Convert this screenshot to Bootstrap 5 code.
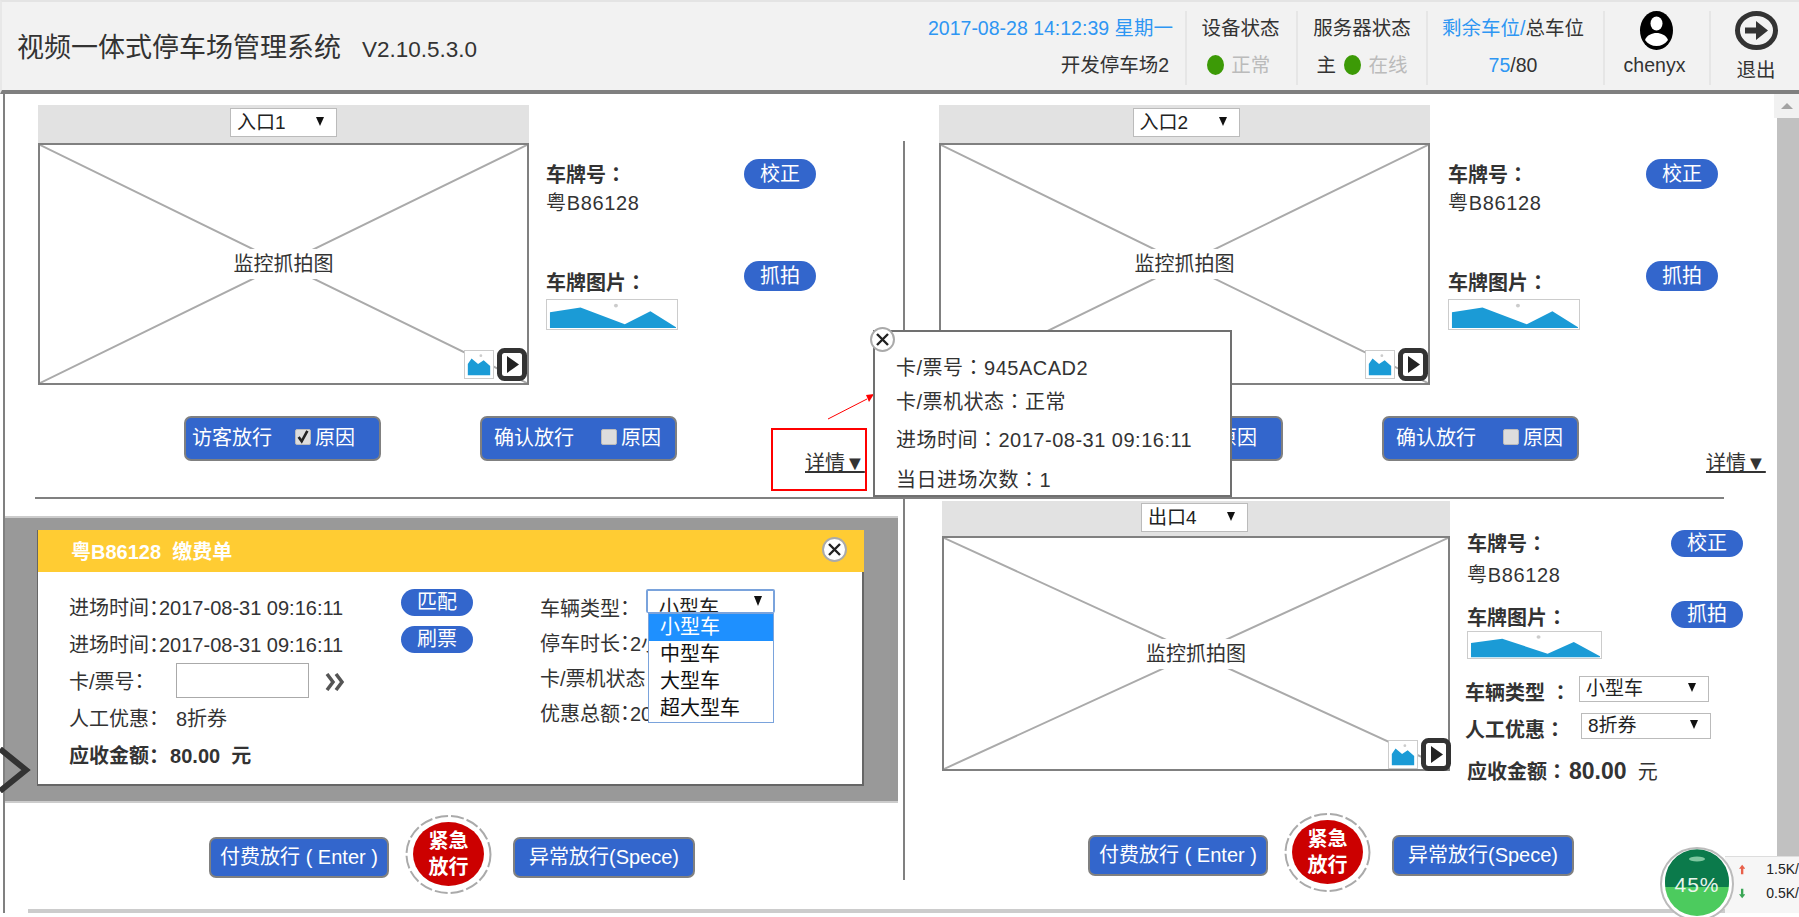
<!DOCTYPE html>
<html lang="zh-CN">
<head>
    <meta charset="UTF-8">
    <title>视频一体式停车场管理系统</title>
    <link href="https://cdn.jsdelivr.net/npm/bootstrap@5.3.3/dist/css/bootstrap.min.css" rel="stylesheet">
    <style>
        html, body { height: 917px; overflow: hidden; }
        body { font-family: "Liberation Sans", "Noto Sans CJK SC", sans-serif; font-size: 20px; color: #333; background: #fff; position: relative; line-height: 1.3; }
        .cn { font-family: "Noto Sans CJK TC", sans-serif; }

        /* header */
        .top-bar { height: 94px; background: #f2f2f2; border-top: 2px solid #e4e4e4; border-bottom: 4px solid #7f7f7f; border-left: 2px solid #e8e8e8; padding: 9px 0 5px; font-size: 19.5px; }
        .sys-title { font-size: 27px; padding-left: 15px; line-height: 74px; white-space: nowrap; }
        .sys-ver { font-size: 22.5px; margin-left: 21px; }
        .top-cell { border-left: 2px solid #e6e6e6; display: flex; flex-direction: column; gap: 3px; align-items: center; text-align: center; }
        .top-cell > div { height: 34px; line-height: 34px; white-space: nowrap; }
        .cell-date { align-items: flex-end; border-left: 0; padding-right: 12px; }
        .cell-date .park-name { margin-right: 4px; }
        .cell-dev { width: 111px; padding-right: 9px; }
        .cell-dev .dev-title { margin-right: -7px; }
        .cell-srv { width: 130px; }
        .cell-slot { width: 177px; padding-right: 5px; }
        .cell-user { width: 106px; padding-right: 5px; }
        .cell-user .top-icon { margin-left: 4px; }
        .cell-exit { width: 90px; padding-left: 2px; }
        .sky { color: #2e96f3; }
        .off { color: #bbb; }
        .led { display: inline-block; width: 17px; height: 20px; border-radius: 50%; background: #3c9a06; vertical-align: -3px; margin: 0 2px 0 3px; }
        .top-icon { height: 39px !important; }

        /* main */
        .main-wrap { height: 819px; padding-left: 3px; }
        .stage { width: 1772px; position: relative; border-left: 2px solid #808080; }
        .stage::before { content: ""; position: absolute; left: 898px; top: 47px; width: 2px; height: 739px; background: #808080; }
        .quad-top { height: 403px; }
        .quad-bot { height: 414px; }
        .quad-a { width: 898px; flex: none; padding: 11px 0 0 33px; }
        .quad-b { padding: 11px 0 0 36px; }
        .quad-b .cam-head { padding-left: 3px; }
        .quad-b .info-col { margin-left: 18px; }
        .quad-c { width: 898px; flex: none; padding-top: 17px; }
        .quad-d { padding: 2px 0 0 39px; }
        .h-rule { height: 2px; width: 1689px; margin-left: 30px; background: #808080; }
        .foot-line { position: absolute; left: 23px; right: 0; top: 815px; height: 4px; background: #ccc; }

        .cam-col { width: 491px; flex: none; }
        .cam-col-wide { width: 508px; }
        .cam-head { height: 38px; background: #e2e2e2; padding-top: 3px; }
        .cam-head-low { height: 35px; padding: 2px 3px 0 0; }
        .pick { width: 107px; height: 29px; background: #fff; border: 1px solid #bbb; padding: 0 12px 0 6px; color: #222; line-height: 27px; font-size: 19px; }
        .pick i { width: 0; height: 0; border-left: 4px solid transparent; border-right: 4px solid transparent; border-top: 9px solid #111; margin-bottom: 3px; }
        .cam-box { height: 242px; border: 2px solid #808080; position: relative; background: #fff; }
        .cam-box-low { height: 235px; }
        .cam-x { position: absolute; left: 0; top: 0; width: 100%; height: 100%; }
        .cam-txt { position: relative; background: #fff; padding: 0 3px; line-height: 30px; }
        .cam-tools { position: absolute; right: 0; bottom: 2px; display: flex; gap: 3px; align-items: flex-end; }
        .cam-box-low .cam-tools { right: -3px; bottom: -2px; }
        .mini-thumb { width: 30px; height: 29px; border: 1px solid #ccc; background: #fff; margin-bottom: 2px; display: block; }
        .play-btn { width: 30px; height: 33px; display: block; }

        .info-col { width: 270px; margin-left: 17px; padding-top: 54px; }
        .info-col-low { width: 276px; padding-top: 29px; }
        .fld { font-weight: 700; }
        .pill-btn { width: 72px; height: 30px; padding: 0; background: #3366cc; color: #fff; border: 0; font-size: 20px; line-height: 30px; }
        .pill-btn-sm { height: 27px; line-height: 27px; }
        .pill-btn:hover { background: #3366cc; color: #fff; }
        .plate-val { line-height: 28px; letter-spacing: .65px; }
        .snap-line { margin-top: 44px; }
        .snap-line .fld { margin-bottom: -5px; }
        .snap-line-low { margin-top: 12px; }
        .snap-line-low .fld { margin-bottom: -3px; }
        .plate-pic { width: 132px; height: 31px; border: 1px solid #ccc; display: block; margin-top: 8px; }
        .plate-pic-low { width: 135px; height: 28px; margin-top: 3px; }

        .act-row { height: 60px; margin-top: 31px; position: relative; }
        .act-btn { background: #3366cc; color: #fff; border: 2px solid #808080; border-radius: 7px; font-size: 20px; padding: 0; height: 45px; line-height: 41px; width: 197px; white-space: nowrap; }
        .act-btn:hover { background: #3366cc; color: #fff; border-color: #808080; }
        .act-btn-s { height: 41px; line-height: 37px; width: 180px; margin-top: 22px; }
        .act-btn-w { width: 182px; }
        .tick-box[type=checkbox] { width: 16px; height: 16px; margin: -4px 4px 0 0; border-radius: 2px; background-color: #ddd; border: 1px solid #bbb; flex: none; }
        .tick-box[type=checkbox]:checked { background-color: #ddd; border-color: #bbb; background-image: url("data:image/svg+xml,%3csvg xmlns='http://www.w3.org/2000/svg' viewBox='0 0 16 16'%3e%3cpath fill='none' stroke='%23222' stroke-width='3' d='M3 8l3.5 5L13 1'/%3e%3c/svg%3e"); }
        .first-act { padding-left: 6px; }
        .first-act .tick-box[type=checkbox] { margin-left: 23px; }
        .second-act { margin-left: 99px; padding-left: 12px; }
        .second-act .tick-box[type=checkbox] { margin-left: 27px; }
        .act-lead-a { margin-left: 146px; }
        .act-lead-b { margin-left: 147px; }
        .more-link { color: #333; line-height: 26px; white-space: nowrap; text-decoration: underline; }
        .quad-a .more-link { margin-left: 128px; }
        .quad-b .more-link { margin-left: 127px; }

        /* 紧急放行 */
        .panic { width: 87px; height: 79px; position: relative; flex: none; margin: 0 21px 0 16px; }
        .panic svg { position: absolute; left: 0; top: 0; width: 100%; height: 100%; }
        .panic-core { position: absolute; left: 8px; top: 7px; width: 71px; height: 64px; border-radius: 50%; background: #cc0000; color: #fff; font-weight: 700; line-height: 26px; }

        /* 缴费单 */
        .fee-band { width: 893px; height: 287px; background: #999; border-top: 2px solid #ccc; border-bottom: 2px solid #ccc; padding: 12px 0 0 32px; position: relative; }
        .fee-card { width: 827px; height: 256px; background: #fff; border-right: 2px solid #666; border-bottom: 2px solid #666; border-left: 1px solid #666; position: relative; }
        .fee-head { height: 42px; background: #ffcc33; color: #fff; font-weight: 700; padding-left: 33px; margin-right: -2px; line-height: 44px; white-space: pre; }
        .fee-body { font-feature-settings: "halt"; padding-top: 17px; white-space: nowrap; }
        .fee-a { width: 363px; padding-left: 31px; flex: none; }
        .fee-a > div { height: 37px; display: flex; align-items: center; }
        .fee-lbl { width: 107px; flex: none; }
        .fee-input { width: 133px; height: 35px; border: 1px solid #aaa; border-radius: 0; padding: 0 6px; margin-top: -2px; }
        .fee-b { width: 139px; flex: none; gap: 10px; }
        .fee-c { padding-top: 1px; position: relative; }
        .fee-c > div { height: 35px; line-height: 35px; }
        .open-pick { position: absolute; left: 106px; top: 0; width: 129px; height: 24px !important; border: 2px solid #7aa3dc; border-bottom-width: 1px; border-radius: 2px; background: #fff; overflow: hidden; padding-left: 11px; line-height: 34px !important; color: #222; }
        .open-pick i { position: absolute; right: 11px; top: 5px; width: 0; height: 0; border-left: 4px solid transparent; border-right: 4px solid transparent; border-top: 10px solid #111; }
        .open-list { position: absolute; left: 108px; top: 24px; width: 126px; height: 110px !important; background: #fff; border: 1px solid #7aa3dc; color: #111; }
        .open-list span { display: block; height: 27px; line-height: 27px; padding-left: 11px; }
        .open-list .cur { background: #1e90ff; color: #fff; }
        .btn-close-x { width: 25px; height: 25px; display: block; }
        .head-close { position: absolute; right: 15px; top: 7px; }
        .back-chev { position: absolute; left: -5px; top: 229px; width: 31px; height: 46px; }
        .bot-row-l { padding-left: 204px; margin-top: 12px; }
        .low-row { height: 270px; }
        .bot-row-r { margin-top: 42px; margin-left: -39px; padding-left: 185px; }

        .form-line { height: 26px; margin-left: -2px; white-space: nowrap; }
        .form-line .fld { width: 114px; flex: none; line-height: 26px; margin-top: 3px; }
        .form-line-a { margin-top: 17px; }
        .form-line-b { margin-top: 11px; }
        .form-line-b .fld { width: 116px; }
        .pick-low { width: 130px; height: 26px; line-height: 24px; }
        .due-line { margin-top: 20px; line-height: 24px; white-space: nowrap; }
        .due-num { font-size: 23px; margin-left: 2px; }

        /* 详情弹层 */
        .tip-box { position: absolute; left: 868px; top: 236px; width: 359px; height: 167px; background: #fff; border: 2px solid #707070; padding: 14px 0 0 21px; letter-spacing: .5px; z-index: 3; }
        .tip-box div { white-space: nowrap; line-height: 30px; }
        .tip-l1 { margin-top: 6px; }
        .tip-l2 { margin-top: 3px; }
        .tip-l3 { margin-top: 7px; }
        .tip-l4 { margin-top: 9px; }
        .tip-close { position: absolute; left: -5px; top: -5px; background: transparent; }
        .red-box { position: absolute; left: 766px; top: 334px; width: 96px; height: 63px; border: 2px solid #f00; z-index: 2; }
        .red-arrow { position: absolute; left: 820px; top: 298px; width: 50px; height: 28px; z-index: 2; }

        /* scrollbar */
        .scroll-col { width: 25px; flex: none; }
        .scroll-up { height: 24px; background: #f1f1f1; }
        .scroll-up i { width: 0; height: 0; border-left: 6px solid transparent; border-right: 6px solid transparent; border-bottom: 6px solid #a3a3a3; }
        .scroll-thumb { height: 795px; margin-left: 3px; background: #c1c1c1; }

        /* 右下角网速球 */
        .net-ball { position: absolute; right: 0; bottom: 0; width: 139px; height: 70px; overflow: hidden; z-index: 5; }
        .net-ball svg.ball { position: absolute; left: 0; top: 0; width: 74px; height: 74px; }
        .net-panel { position: absolute; right: 0; top: 9px; width: 74px; height: 57px; background: #f6f6f6; border-top: 1px solid #ddd; font-size: 14px; color: #222; padding-left: 14px; }
        .net-panel div { height: 23px; line-height: 23px; white-space: nowrap; margin-top: 1px; display: flex; align-items: center; gap: 21px; }
    </style>
</head>
<body>
    <svg width="0" height="0" class="position-absolute">
        <symbol id="pic-wide" viewBox="0 0 132 31" preserveAspectRatio="none">
            <polygon points="3,13 34,8 79,26 105,12 131,29 131,30 3,30" fill="#1b9bd6"/>
            <circle cx="70" cy="6" r="2" fill="#ccc"/>
        </symbol>
        <symbol id="pic-mini" viewBox="0 0 30 29">
            <polygon points="3,26 3,14 7,8 14,14 20,10 27,16 27,26" fill="#1b9bd6"/>
            <circle cx="17" cy="5" r="1.5" fill="#ccc"/>
        </symbol>
        <symbol id="play" viewBox="0 0 30 33">
            <rect x="2.5" y="2.5" width="25" height="28" rx="5" fill="#fff" stroke="#333" stroke-width="5"/>
            <polygon points="10,8 22,16.5 10,25" fill="#222"/>
        </symbol>
        <symbol id="close-x" viewBox="0 0 25 25">
            <circle cx="12.5" cy="12.5" r="11.5" fill="#fff" stroke="#aaa" stroke-width="2"/>
            <path d="M7 7l11 11M18 7L7 18" stroke="#222" stroke-width="2.4"/>
        </symbol>
    </svg>

    <header class="top-bar d-flex">
        <div class="sys-title">视频一体式停车场管理系统<span class="sys-ver">V2.10.5.3.0</span></div>
        <div class="top-cell cell-date ms-auto">
            <div class="sky">2017-08-28 14:12:39 星期一</div>
            <div class="park-name">开发停车场2</div>
        </div>
        <div class="top-cell cell-dev">
            <div class="dev-title">设备状态</div>
            <div><span class="led"></span> <span class="off">正常</span></div>
        </div>
        <div class="top-cell cell-srv">
            <div>服务器状态</div>
            <div>主<span class="led ms-2"></span> <span class="off">在线</span></div>
        </div>
        <div class="top-cell cell-slot">
            <div><span class="sky">剩余车位/</span>总车位</div>
            <div><span class="sky">75</span>/80</div>
        </div>
        <div class="top-cell cell-user">
            <div class="top-icon">
                <svg width="33" height="39" viewBox="0 0 33 39">
                    <ellipse cx="16.500" cy="19.500" rx="16.500" ry="19.500" fill="#000"/>
                    <ellipse cx="16.500" cy="12.500" rx="6" ry="7" fill="#fff"/>
                    <path d="M5 29c2-5 7-7 11.500-7s9.500 2 11.500 7c-3 4-7 6-11.500 6S8 33 5 29z" fill="#fff"/>
                </svg>
            </div>
            <div class="lh-sm">chenyx</div>
        </div>
        <div class="top-cell cell-exit">
            <div class="top-icon">
                <svg width="43" height="39" viewBox="0 0 43 39">
                    <ellipse cx="21.500" cy="19.500" rx="19" ry="17" fill="#f2f2f2" stroke="#333" stroke-width="5"/>
                    <path d="M10 16.500h11V10l12 9.500-12 9.500v-6.500H10z" fill="#333"/>
                </svg>
            </div>
            <div>退出</div>
        </div>
    </header>

    <div class="main-wrap d-flex">
        <div class="stage">
            <div class="quad-top d-flex">
                <section class="quad-a">
                    <div class="d-flex">
                        <div class="cam-col">
                            <div class="cam-head d-flex justify-content-center"><div class="pick d-flex justify-content-between align-items-center">入口1<i></i></div></div>
                            <div class="cam-box d-flex align-items-center justify-content-center">
                                <svg class="cam-x" viewBox="0 0 100 100" preserveAspectRatio="none"><path d="M0 0L100 100M100 0L0 100" stroke="#aaa" stroke-width="2" vector-effect="non-scaling-stroke"/></svg>
                                <span class="cam-txt">监控抓拍图</span>
                                <div class="cam-tools"><svg class="mini-thumb"><use href="#pic-mini"/></svg><svg class="play-btn"><use href="#play"/></svg></div>
                            </div>
                        </div>
                        <div class="info-col">
                            <div class="d-flex justify-content-between align-items-center"><span class="fld">车牌号<span class="cn" lang="zh-TW">：</span></span><button class="btn rounded-pill pill-btn">校正</button></div>
                            <div class="plate-val">粤B86128</div>
                            <div class="snap-line d-flex justify-content-between align-items-end"><span class="fld">车牌图片<span class="cn" lang="zh-TW">：</span></span><button class="btn rounded-pill pill-btn">抓拍</button></div>
                            <svg class="plate-pic"><use href="#pic-wide"/></svg>
                        </div>
                    </div>
                    <div class="act-row d-flex">
                        <button class="btn act-btn d-flex align-items-center act-lead-a first-act">访客放行<input class="form-check-input tick-box" type="checkbox" checked>原因</button>
                        <button class="btn act-btn d-flex align-items-center second-act">确认放行<input class="form-check-input tick-box" type="checkbox">原因</button>
                        <a class="more-link align-self-end" href="#">详情▼</a>
                    </div>
                </section>
                <section class="quad-b flex-grow-1">
                    <div class="d-flex">
                        <div class="cam-col">
                            <div class="cam-head d-flex justify-content-center"><div class="pick d-flex justify-content-between align-items-center">入口2<i></i></div></div>
                            <div class="cam-box d-flex align-items-center justify-content-center">
                                <svg class="cam-x" viewBox="0 0 100 100" preserveAspectRatio="none"><path d="M0 0L100 100M100 0L0 100" stroke="#aaa" stroke-width="2" vector-effect="non-scaling-stroke"/></svg>
                                <span class="cam-txt">监控抓拍图</span>
                                <div class="cam-tools"><svg class="mini-thumb"><use href="#pic-mini"/></svg><svg class="play-btn"><use href="#play"/></svg></div>
                            </div>
                        </div>
                        <div class="info-col">
                            <div class="d-flex justify-content-between align-items-center"><span class="fld">车牌号<span class="cn" lang="zh-TW">：</span></span><button class="btn rounded-pill pill-btn">校正</button></div>
                            <div class="plate-val">粤B86128</div>
                            <div class="snap-line d-flex justify-content-between align-items-end"><span class="fld">车牌图片<span class="cn" lang="zh-TW">：</span></span><button class="btn rounded-pill pill-btn">抓拍</button></div>
                            <svg class="plate-pic"><use href="#pic-wide"/></svg>
                        </div>
                    </div>
                    <div class="act-row d-flex">
                        <button class="btn act-btn d-flex align-items-center act-lead-b first-act">访客放行<input class="form-check-input tick-box" type="checkbox" checked>原因</button>
                        <button class="btn act-btn d-flex align-items-center second-act">确认放行<input class="form-check-input tick-box" type="checkbox">原因</button>
                        <a class="more-link align-self-end" href="#">详情▼</a>
                    </div>
                </section>
            </div>

            <div class="h-rule"></div>

            <div class="quad-bot d-flex">
                <section class="quad-c">
                    <div class="fee-band">
                        <div class="fee-card">
                            <div class="fee-head">粤B86128  缴费单</div>
                            <svg class="btn-close-x head-close"><use href="#close-x"/></svg>
                            <div class="fee-body d-flex">
                                <div class="fee-a">
                                    <div>进场时间<span class="cn" lang="zh-TW">：</span>2017-08-31 09:16:11</div>
                                    <div>进场时间<span class="cn" lang="zh-TW">：</span>2017-08-31 09:16:11</div>
                                    <div>
                                        <span class="fee-lbl">卡/票号<span class="cn" lang="zh-TW">：</span></span>
                                        <input class="form-control fee-input" type="text">
                                        <svg class="ms-3" width="20" height="18" viewBox="0 0 20 18"><path d="M2 1l6 8-6 8M11 1l6 8-6 8" fill="none" stroke="#555" stroke-width="3.500"/></svg>
                                    </div>
                                    <div><span class="fee-lbl">人工优惠<span class="cn" lang="zh-TW">：</span></span>8折券</div>
                                    <div class="fw-bold due-gap">应收金额<span class="cn" lang="zh-TW">：</span>&nbsp;&nbsp;80.00&nbsp;&nbsp;元</div>
                                </div>
                                <div class="fee-b d-flex flex-column align-items-start">
                                    <button class="btn rounded-pill pill-btn pill-btn-sm">匹配</button>
                                    <button class="btn rounded-pill pill-btn pill-btn-sm">刷票</button>
                                </div>
                                <div class="fee-c flex-grow-1">
                                    <div>车辆类型<span class="cn" lang="zh-TW">：</span></div>
                                    <div>停车时长<span class="cn" lang="zh-TW">：</span>2小时</div>
                                    <div>卡/票机状态<span class="cn" lang="zh-TW">：</span>正常</div>
                                    <div>优惠总额<span class="cn" lang="zh-TW">：</span>20.00</div>
                                    <div class="open-pick">小型车<i></i></div>
                                    <div class="open-list"><span class="cur">小型车</span><span>中型车</span><span>大型车</span><span>超大型车</span></div>
                                </div>
                            </div>
                        </div>
                        <svg class="back-chev" viewBox="0 0 31 46"><polyline points="0,2 26,23 0,44" fill="none" stroke="#333" stroke-width="6"/></svg>
                    </div>
                    <div class="d-flex bot-row-l">
                        <button class="btn act-btn act-btn-s">付费放行 ( Enter )</button>
                        <div class="panic">
                            <svg viewBox="0 0 87 79"><ellipse cx="43.500" cy="39.500" rx="42" ry="38.500" fill="none" stroke="#aaa" stroke-width="2" stroke-dasharray="13 3"/></svg>
                            <div class="panic-core d-flex flex-column align-items-center justify-content-center"><span>紧急</span><span>放行</span></div>
                        </div>
                        <button class="btn act-btn act-btn-s act-btn-w">异常放行(Spece)</button>
                    </div>
                </section>
                <section class="quad-d flex-grow-1">
                    <div class="d-flex low-row">
                        <div class="cam-col cam-col-wide">
                            <div class="cam-head cam-head-low d-flex justify-content-center"><div class="pick d-flex justify-content-between align-items-center">出口4<i></i></div></div>
                            <div class="cam-box cam-box-low d-flex align-items-center justify-content-center">
                                <svg class="cam-x" viewBox="0 0 100 100" preserveAspectRatio="none"><path d="M0 0L100 100M100 0L0 100" stroke="#aaa" stroke-width="2" vector-effect="non-scaling-stroke"/></svg>
                                <span class="cam-txt">监控抓拍图</span>
                                <div class="cam-tools"><svg class="mini-thumb"><use href="#pic-mini"/></svg><svg class="play-btn"><use href="#play"/></svg></div>
                            </div>
                        </div>
                        <div class="info-col info-col-low">
                            <div class="d-flex justify-content-between align-items-center"><span class="fld">车牌号<span class="cn" lang="zh-TW">：</span></span><button class="btn rounded-pill pill-btn pill-btn-sm">校正</button></div>
                            <div class="plate-val mt-1">粤B86128</div>
                            <div class="snap-line-low d-flex justify-content-between align-items-end"><span class="fld">车牌图片<span class="cn" lang="zh-TW">：</span></span><button class="btn rounded-pill pill-btn pill-btn-sm">抓拍</button></div>
                            <svg class="plate-pic plate-pic-low"><use href="#pic-wide"/></svg>
                            <div class="d-flex form-line form-line-a"><span class="fld">车辆类型 <span class="cn" lang="zh-TW">：</span></span><div class="pick pick-low d-flex justify-content-between align-items-center">小型车<i></i></div></div>
                            <div class="d-flex form-line form-line-b"><span class="fld">人工优惠<span class="cn" lang="zh-TW">：</span></span><div class="pick pick-low d-flex justify-content-between align-items-center">8折券<i></i></div></div>
                            <div class="due-line"><span class="fld">应收金额<span class="cn" lang="zh-TW">：</span></span><b class="due-num">80.00</b>&nbsp;&nbsp;元</div>
                        </div>
                    </div>
                    <div class="d-flex bot-row-r">
                        <button class="btn act-btn act-btn-s">付费放行 ( Enter )</button>
                        <div class="panic">
                            <svg viewBox="0 0 87 79"><ellipse cx="43.500" cy="39.500" rx="42" ry="38.500" fill="none" stroke="#aaa" stroke-width="2" stroke-dasharray="13 3"/></svg>
                            <div class="panic-core d-flex flex-column align-items-center justify-content-center"><span>紧急</span><span>放行</span></div>
                        </div>
                        <button class="btn act-btn act-btn-s act-btn-w">异常放行(Spece)</button>
                    </div>
                </section>
            </div>

            <div class="foot-line"></div>

            <div class="red-box"></div>
            <svg class="red-arrow" viewBox="0 0 50 28"><path d="M3 27L42 7" stroke="#f00" stroke-width="1"/><polygon points="49,2 41,3 44,10" fill="#f00"/></svg>
            <div class="tip-box">
                <svg class="btn-close-x tip-close"><use href="#close-x"/></svg>
                <div class="tip-l1">卡/票号<span class="cn" lang="zh-TW">：</span>945ACAD2</div>
                <div class="tip-l2">卡/票机状态<span class="cn" lang="zh-TW">：</span>正常</div>
                <div class="tip-l3">进场时间<span class="cn" lang="zh-TW">：</span>2017-08-31 09:16:11</div>
                <div class="tip-l4">当日进场次数<span class="cn" lang="zh-TW">：</span>1</div>
            </div>
        </div>

        <div class="scroll-col">
            <div class="scroll-up d-flex align-items-center justify-content-center"><i></i></div>
            <div class="scroll-thumb"></div>
        </div>
    </div>

    <div class="net-ball">
        <div class="net-panel">
            <div><svg width="10" height="15" viewBox="0 0 8 12"><path d="M4 0l4 5H5.500v7h-3V5H0z" fill="#e8604a"/></svg>1.5K/</div>
            <div><svg width="10" height="15" viewBox="0 0 8 12"><path d="M4 12L0 7h2.500V0h3v7H8z" fill="#3aa655"/></svg>0.5K/</div>
        </div>
        <svg class="ball" viewBox="0 0 74 74">
            <circle cx="37" cy="37" r="36" fill="#fff" stroke="#bbb" stroke-width="2"/>
            <circle cx="37" cy="37" r="32" fill="#4ccb5e"/>
            <path d="M5.500 40A32 32 0 1 1 68.500 40z" fill="#0b7a4b"/>
            <ellipse cx="37" cy="12" rx="8" ry="2.500" fill="#7fc7a0"/>
            <text x="37" y="45" text-anchor="middle" font-size="21" letter-spacing="1" fill="#e9f5ec" font-family="Liberation Sans, sans-serif">45%</text>
        </svg>
    </div>
</body>
</html>
